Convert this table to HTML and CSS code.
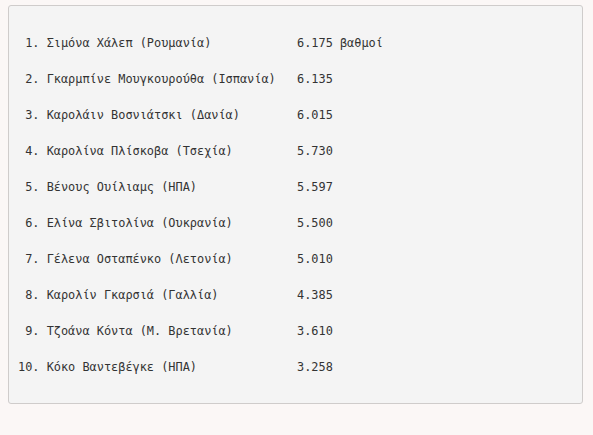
FILE: index.html
```html
<!DOCTYPE html>
<html lang="el">
<head>
<meta charset="utf-8">
<title>Κατάταξη</title>
<link rel="stylesheet" href="styles.css">
</head>
<body>
<div class="box">
  <div class="ranking">
    <span class="name"> 1. Σιμόνα Χάλεπ (Ρουμανία)</span><span class="pts">6.175 βαθμοί</span>
    <span class="name"> 2. Γκαρμπίνε Μουγκουρούθα (Ισπανία)</span><span class="pts">6.135</span>
    <span class="name"> 3. Καρολάιν Βοσνιάτσκι (Δανία)</span><span class="pts">6.015</span>
    <span class="name"> 4. Καρολίνα Πλίσκοβα (Τσεχία)</span><span class="pts">5.730</span>
    <span class="name"> 5. Βένους Ουίλιαμς (ΗΠΑ)</span><span class="pts">5.597</span>
    <span class="name"> 6. Ελίνα Σβιτολίνα (Ουκρανία)</span><span class="pts">5.500</span>
    <span class="name"> 7. Γέλενα Οσταπένκο (Λετονία)</span><span class="pts">5.010</span>
    <span class="name"> 8. Καρολίν Γκαρσιά (Γαλλία)</span><span class="pts">4.385</span>
    <span class="name"> 9. Τζοάνα Κόντα (Μ. Βρετανία)</span><span class="pts">3.610</span>
    <span class="name">10. Κόκο Βαντεβέγκε (ΗΠΑ)</span><span class="pts">3.258</span>
  </div>
</div>
</body>
</html>
```

FILE: styles.css
```css
html, body {
  margin: 0;
  padding: 0;
  background: #fbf7f6;
}

body {
  padding: 5px 0 0 8px;
}

.box {
  box-sizing: border-box;
  width: 575px;
  height: 399px;
  background: #f4f4f4;
  border: 1px solid #cfcccb;
  border-radius: 3px;
  padding: 28px 9px 0 9px;
}

.ranking {
  display: grid;
  grid-template-columns: 279px auto;
  row-gap: 18px;
  font-family: "DejaVu Sans Mono", "Liberation Mono", monospace;
  font-size: 11.9px;
  line-height: 18px;
  color: #333;
}

.name, .pts {
  white-space: pre;
}
```
